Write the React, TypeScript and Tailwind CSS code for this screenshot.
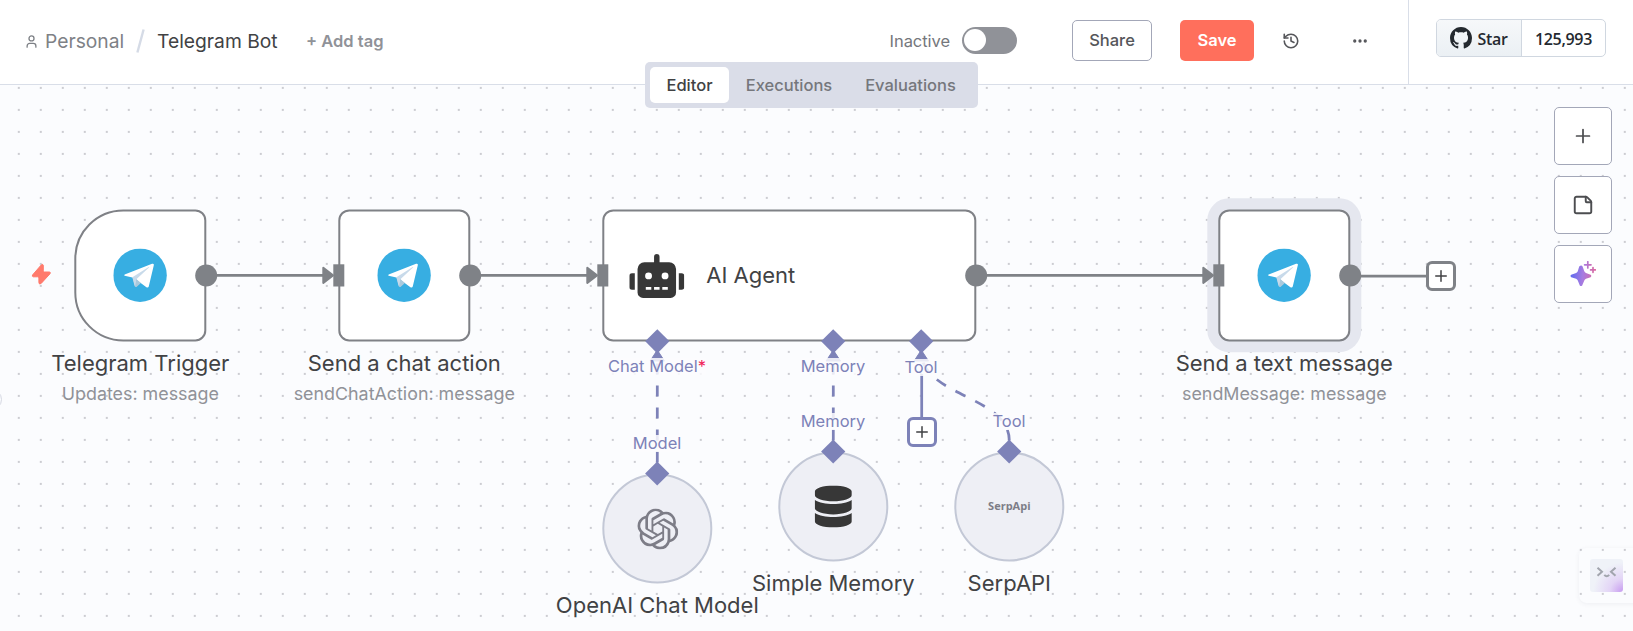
import type { ReactNode } from "react";
import { Ellipsis, History, Plus, StickyNote, User } from "lucide-react";
import { FaDatabase, FaRobot } from "react-icons/fa";
import { SiOpenai } from "react-icons/si";

function GithubMark() {
  return (
    <svg viewBox="0 0 16 16" width="22" height="22" fill="currentColor">
      <path d="M8 0c4.42 0 8 3.58 8 8a8.013 8.013 0 0 1-5.45 7.59c-.4.08-.55-.17-.55-.38 0-.27.01-1.13.01-2.2 0-.75-.25-1.23-.54-1.48 1.78-.2 3.65-.88 3.65-3.95 0-.88-.31-1.59-.82-2.15.08-.2.36-1.02-.08-2.12 0 0-.67-.22-2.2.82-.64-.18-1.32-.27-2-.27-.68 0-1.36.09-2 .27-1.53-1.03-2.2-.82-2.2-.82-.44 1.1-.16 1.92-.08 2.12-.51.56-.82 1.28-.82 2.15 0 3.06 1.86 3.75 3.64 3.95-.23.2-.44.55-.51 1.07-.46.21-1.61.55-2.33-.66-.15-.24-.6-.83-1.23-.82-.67.01-.27.38.01.53.34.19.73.9.82 1.13.16.45.68 1.31 2.69.94 0 .67.01 1.3.01 1.49 0 .21-.15.45-.55.38A7.995 7.995 0 0 1 0 8c0-4.42 3.58-8 8-8Z" />
    </svg>
  );
}

function TelegramIcon() {
  return (
    <svg viewBox="0 0 160 160" className="size-[53.5px]">
      <circle cx="80" cy="80" r="80" fill="#37aee2" />
      <path d="M57 86 66 115Q68 117 71 114L84 102 78 90Z" fill="#a9c6d8" />
      <path d="M34 78 116 46Q123 44 121 51L106 114Q104 119 99 116L80 102 68 91 57 87 34 82Q31 80 34 78Z" fill="#fff" />
      <path d="M57 86 106 56Q109 55 106 58L69 92 66 115Q64 114 63 110Z" fill="#c8daea" />
      <path d="M66 115 69 93 82 103 70 114Q68 116 66 115Z" fill="#a9c9dd" />
    </svg>
  );
}

function NodeTitle({ title, subtitle, className }: { title: string; subtitle?: string; className: string }) {
  return (
    <div className={`absolute flex w-0 translate-x-[0.3px] flex-col items-center whitespace-nowrap ${className}`}>
      <span className="text-[22px] leading-[28px] text-[#414244]">{title}</span>
      {subtitle && <span className="mt-[4px] text-[17.875px] leading-[26px] text-[#909298]">{subtitle}</span>}
    </div>
  );
}

function PortLabel({ children, className }: { children: ReactNode; className: string }) {
  return (
    <div className={`absolute flex w-0 justify-center whitespace-nowrap ${className}`}>
      <span className="bg-[#fbfcfe]/85 text-[16.5px] leading-[17px] text-[#7d82b8]">{children}</span>
    </div>
  );
}

function RootNode({ children, className }: { children: ReactNode; className: string }) {
  return (
    <div className={`absolute flex h-[132px] translate-x-[0.3px] translate-y-[0.4px] items-center border-2 border-[#7f8186] bg-white ${className}`}>
      {children}
    </div>
  );
}

function SubNode({ children, className }: { children: ReactNode; className: string }) {
  return (
    <div className={`absolute flex size-[110px] translate-x-[0.3px] translate-y-[-0.5px] items-center justify-center rounded-full border-2 border-[#c3c8d6] bg-[#eeeff5] ${className}`}>
      {children}
    </div>
  );
}

function Edges() {
  return (
    <svg className="absolute inset-0" width="1633" height="546" viewBox="0 85 1633 546">
      <g stroke="#7f8287" strokeWidth="2.75" fill="none">
        <path d="M206 275.4H326M470 275.4H590M976 275.4H1206M1350 276H1426" />
      </g>
      <g fill="#7f8287" stroke="#7f8287" strokeWidth="2" strokeLinejoin="round">
        <path d="M323.3 267.7 333 275.4 323.3 283Z" />
        <path d="M587.3 267.7 597 275.4 587.3 283Z" />
        <path d="M1203.3 267.7 1213 275.4 1203.3 283Z" />
      </g>
      <g stroke="#7d82b8" strokeWidth="2.75" fill="none">
        <g strokeDasharray="11 11">
          <path d="M657.3 462.5V352" />
          <path d="M833.3 440.5V352" />
          <path d="M1009.3 440.5C1009.3 396 921.3 396 921.3 352" />
        </g>
        <path d="M921.7 374V418" />
      </g>
      <g fill="#7d82b8" stroke="#7d82b8" strokeLinejoin="round">
        <path d="M657.3 350 664.5 361H650.1Z" />
        <path d="M833.3 350 840.5 361H826.1Z" />
        <path d="M921.3 350 928.5 361H914.1Z" />
      </g>
    </svg>
  );
}

function Ports() {
  return (
    <svg className="absolute inset-0" width="1633" height="546" viewBox="0 85 1633 546">
      <g fill="#7f8287">
        <circle cx="206.2" cy="275.5" r="11" />
        <circle cx="470.2" cy="275.5" r="11" />
        <circle cx="976.2" cy="275.5" r="11" />
        <circle cx="1350.2" cy="275.5" r="11" />
        <rect x="333.3" y="264.3" width="11" height="22.2" />
        <rect x="597.3" y="264.3" width="11" height="22.2" />
        <rect x="1213.3" y="264.3" width="11" height="22.2" />
      </g>
      <g fill="#7d82b8">
        <path d="M657.3 329.2 669.4 341.3 657.3 353.4 645.2 341.3Z" />
        <path d="M833.2 329.2 845.3 341.3 833.2 353.4 821.1 341.3Z" />
        <path d="M921.2 329.2 933.3 341.3 921.2 353.4 909.1 341.3Z" />
        <path d="M657.2 461.4 669.3 473.5 657.2 485.6 645.1 473.5Z" />
        <path d="M833.2 439.4 845.3 451.5 833.2 463.6 821.1 451.5Z" />
        <path d="M1009.2 439.4 1021.3 451.5 1009.2 463.6 997.1 451.5Z" />
      </g>
      <path
        d="M43.3 265.2V270.8Q43.3 272 44.5 272H49.4Q51 272.2 50 273.8L41.2 283.4Q39 285 38.9 282.6V278Q38.9 276.8 37.7 276.8H33.3Q31.5 276.4 32.7 274.8L41.2 265Q42.8 263.6 43.3 265.2Z"
        fill="#ff7a6c"
        stroke="#ff7a6c"
      />
    </svg>
  );
}

function DotGrid() {
  return (
    <svg className="absolute inset-0" width="1633" height="546">
      <defs>
        <pattern id="dots" x="7.8" y="-8.1" width="22" height="22" patternUnits="userSpaceOnUse">
          <circle cx="11" cy="11" r="0.8" fill="#8e9098" />
        </pattern>
      </defs>
      <rect width="1633" height="546" fill="url(#dots)" />
    </svg>
  );
}

function AddHandle({ className }: { className: string }) {
  return (
    <button className={`absolute flex size-[30px] items-center justify-center rounded-[6px] border-3 bg-white text-[#414244] ${className}`}>
      <Plus className="shrink-0" size={18} strokeWidth={2} />
    </button>
  );
}

function ToolButton({ children }: { children: ReactNode }) {
  return (
    <button className="flex size-[58px] items-center justify-center rounded-[5px] border border-[#a3a7b8] bg-white text-[#4c4d50]">
      {children}
    </button>
  );
}

function SparkleIcon() {
  return (
    <svg width="26" height="26" viewBox="0 0 26 26">
      <defs>
        <linearGradient id="spark" x1="0" y1="12" x2="26" y2="14" gradientUnits="userSpaceOnUse">
          <stop offset="0" stopColor="#5b6bf0" />
          <stop offset="0.5" stopColor="#a77be0" />
          <stop offset="1" stopColor="#e0669a" />
        </linearGradient>
      </defs>
      <path
        d="M9.2 5.5Q11.4 3.5 12.6 5.5L14.3 10.2Q14.8 11.4 16 12L20.6 13.8Q22 15 20.6 16.2L16 17.8Q14.8 18.3 14.3 19.5L12.2 24.4Q11 25.8 9.8 24.4L7.8 19.5Q7.3 18.3 6.1 17.8L1.2 16.2Q-.2 15 1.2 13.8L6.1 12Q7.3 11.4 7.8 10.2Z"
        fill="url(#spark)"
      />
      <path d="M17.8.7V7M14.6 3.8H21M23 6.5V11.3M20.6 8.9H25.4" stroke="url(#spark)" strokeWidth="1.7" strokeLinecap="round" fill="none" />
    </svg>
  );
}

function Header() {
  return (
    <header className="flex h-[85px] w-full shrink-0 border-b border-[#d9dee8] bg-white">
      <div className="flex h-[82px] flex-1 items-center pl-6">
        <User className="mr-[6px] text-[#7e8186]" size={15} strokeWidth={2.1} />
        <span className="w-[91px] text-[19.25px] text-[#7e8186]">Personal</span>
        <svg className="mr-3" width="9" height="24" viewBox="0 0 9 24">
          <path d="M7.6.5 1.4 23.5" stroke="#d5dbe6" strokeWidth="2.4" />
        </svg>
        <span className="w-[149px] text-[19.25px] text-[#414244]">Telegram Bot</span>
        <span className="text-[16.5px] font-semibold text-[#909298]">+ Add tag</span>
      </div>
      <div className="flex h-[81px] items-center pr-[39px]">
        <span className="mr-[12px] mt-px text-[16.5px] tracking-[-0.05px] text-[#75777c]">Inactive</span>
        <span className="mr-[55px] flex h-[27px] w-[55px] items-center rounded-full bg-[#909298] pl-[2px]">
          <span className="mb-px size-[22px] rounded-full bg-white" />
        </span>
        <button className="mr-7 h-[41px] w-[80px] rounded-[5px] border border-[#a3a7b8] text-[16.5px] font-medium text-[#55565a]">Share</button>
        <button className="mr-7 h-[41px] w-[74px] rounded-[5px] bg-[#ff6f5c] text-[16.5px] font-semibold text-white">Save</button>
        <History className="mr-[51px] text-[#55565a]" size={18} strokeWidth={2.1} />
        <Ellipsis className="text-[#55565a]" size={18} strokeWidth={2.4} />
      </div>
      <div className="h-[84px] w-[225px] border-l border-[#d9dee8] pl-[27px] pt-[19px]">
        <div className="flex h-[38px] w-[170px] overflow-hidden rounded-[5px] border border-[#d0d7e0] font-['Open_Sans',sans-serif] text-[16px] font-semibold tracking-[-0.3px] text-[#24292f]">
          <span className="flex w-[85px] items-center justify-center gap-[5px] border-r border-[#d0d7e0] bg-gradient-to-b from-[#f6f8fa] to-[#ebf0f4]">
            <GithubMark />
            <span className="pt-px">Star</span>
          </span>
          <span className="flex flex-1 items-center justify-center pt-px">125,993</span>
        </div>
      </div>
    </header>
  );
}

export default function App() {
  return (
    <div className="relative flex h-[631px] w-[1633px] flex-col overflow-hidden font-['Inter',sans-serif]">
      <Header />
      <nav className="absolute left-[645px] top-[62px] z-10 flex h-[46px] w-[333px] items-center rounded-[5px] bg-[#dadde8] p-[5px] text-[16.5px] font-medium text-[#75777c]">
        <span className="flex h-[36px] w-[79px] items-center justify-center rounded-[5px] bg-white text-[#414244]">Editor</span>
        <span className="flex w-[120px] items-center justify-center">Executions</span>
        <span className="flex w-[123px] items-center justify-center">Evaluations</span>
      </nav>

      <main className="relative flex-1 overflow-hidden bg-[#fbfcfe]">
        <DotGrid />
        <div className="absolute left-[1207px] top-[113px] size-[154px] translate-x-[0.3px] translate-y-[0.2px] rounded-[22px] bg-[#e5e7ef]" />
        <Edges />

        <RootNode className="left-[74px] top-[124px] w-[132px] justify-center rounded-l-[49px] rounded-r-[11px]"><TelegramIcon /></RootNode>
        <RootNode className="left-[338px] top-[124px] w-[132px] justify-center rounded-[11px]"><TelegramIcon /></RootNode>
        <RootNode className="left-[602px] top-[124px] w-[374px] gap-[22px] rounded-[11px] pl-[25px]">
          <FaRobot className="text-[#373737]" size={55} />
          <span className="text-[22px] text-[#414244]">AI Agent</span>
        </RootNode>
        <RootNode className="left-[1218px] top-[124px] w-[132px] justify-center rounded-[11px]"><TelegramIcon /></RootNode>

        <SubNode className="left-[602px] top-[389px]"><SiOpenai className="text-[#7d7d87]" size={41} /></SubNode>
        <SubNode className="left-[778px] top-[367px]"><FaDatabase className="text-[#373737]" size={42} /></SubNode>
        <SubNode className="left-[954px] top-[367px]">
          <span className="-mt-[2px] font-['Open_Sans',sans-serif] text-[11px] font-bold text-[#7d7d87]">SerpApi</span>
        </SubNode>

        <Ports />

        <PortLabel className="left-[657px] top-[273px]">Chat Model<span className="text-[#f0245a]">*</span></PortLabel>
        <PortLabel className="left-[833px] top-[273px]">Memory</PortLabel>
        <PortLabel className="left-[921px] top-[274px]">Tool</PortLabel>
        <PortLabel className="left-[657px] top-[350px]">Model</PortLabel>
        <PortLabel className="left-[833px] top-[328px]">Memory</PortLabel>
        <PortLabel className="left-[1009px] top-[328px]">Tool</PortLabel>

        <AddHandle className="left-[907px] top-[332px] border-[#7d82b8]" />
        <AddHandle className="left-[1426px] top-[176px] border-[#7f8287]" />

        <NodeTitle className="left-[140px] top-[264px]" title="Telegram Trigger" subtitle="Updates: message" />
        <NodeTitle className="left-[404px] top-[264px]" title="Send a chat action" subtitle="sendChatAction: message" />
        <NodeTitle className="left-[1284px] top-[264px]" title="Send a text message" subtitle="sendMessage: message" />
        <NodeTitle className="left-[657px] top-[506px]" title="OpenAI Chat Model" />
        <NodeTitle className="left-[833px] top-[484px]" title="Simple Memory" />
        <NodeTitle className="left-[1009px] top-[484px]" title="SerpAPI" />

        <aside className="absolute left-[1554px] top-[22px] flex flex-col gap-[11px]">
          <ToolButton><Plus size={22} strokeWidth={1.9} /></ToolButton>
          <ToolButton><StickyNote size={22} strokeWidth={2.1} /></ToolButton>
          <ToolButton><SparkleIcon /></ToolButton>
        </aside>

        <div className="absolute -left-[19px] top-[304px] size-[21px] rounded-full border border-[#d5d8e2]" />

        <div className="absolute left-[1579px] top-[463px] h-[55px] w-[70px] rounded-[8px] pl-[11px] pt-[11px] shadow-[0_1px_5px_rgba(60,60,80,0.07)]">
          <svg width="33" height="33" viewBox="0 0 33 33">
            <defs>
              <radialGradient id="face" cx="1" cy="1" r="0.9">
                <stop offset="0" stopColor="#c79bf0" />
                <stop offset="0.45" stopColor="#e3d5f6" />
                <stop offset="1" stopColor="#eff2f8" />
              </radialGradient>
            </defs>
            <rect width="33" height="33" rx="3" fill="url(#face)" />
            <path d="M7.5 8.8 12 12.8 7.5 16.8M25.5 8.8 21 12.8 25.5 16.8M14.3 15.8Q16.7 18.6 19.2 15.8" stroke="#a2a5ae" strokeWidth="2" fill="none" />
          </svg>
        </div>
      </main>
    </div>
  );
}
